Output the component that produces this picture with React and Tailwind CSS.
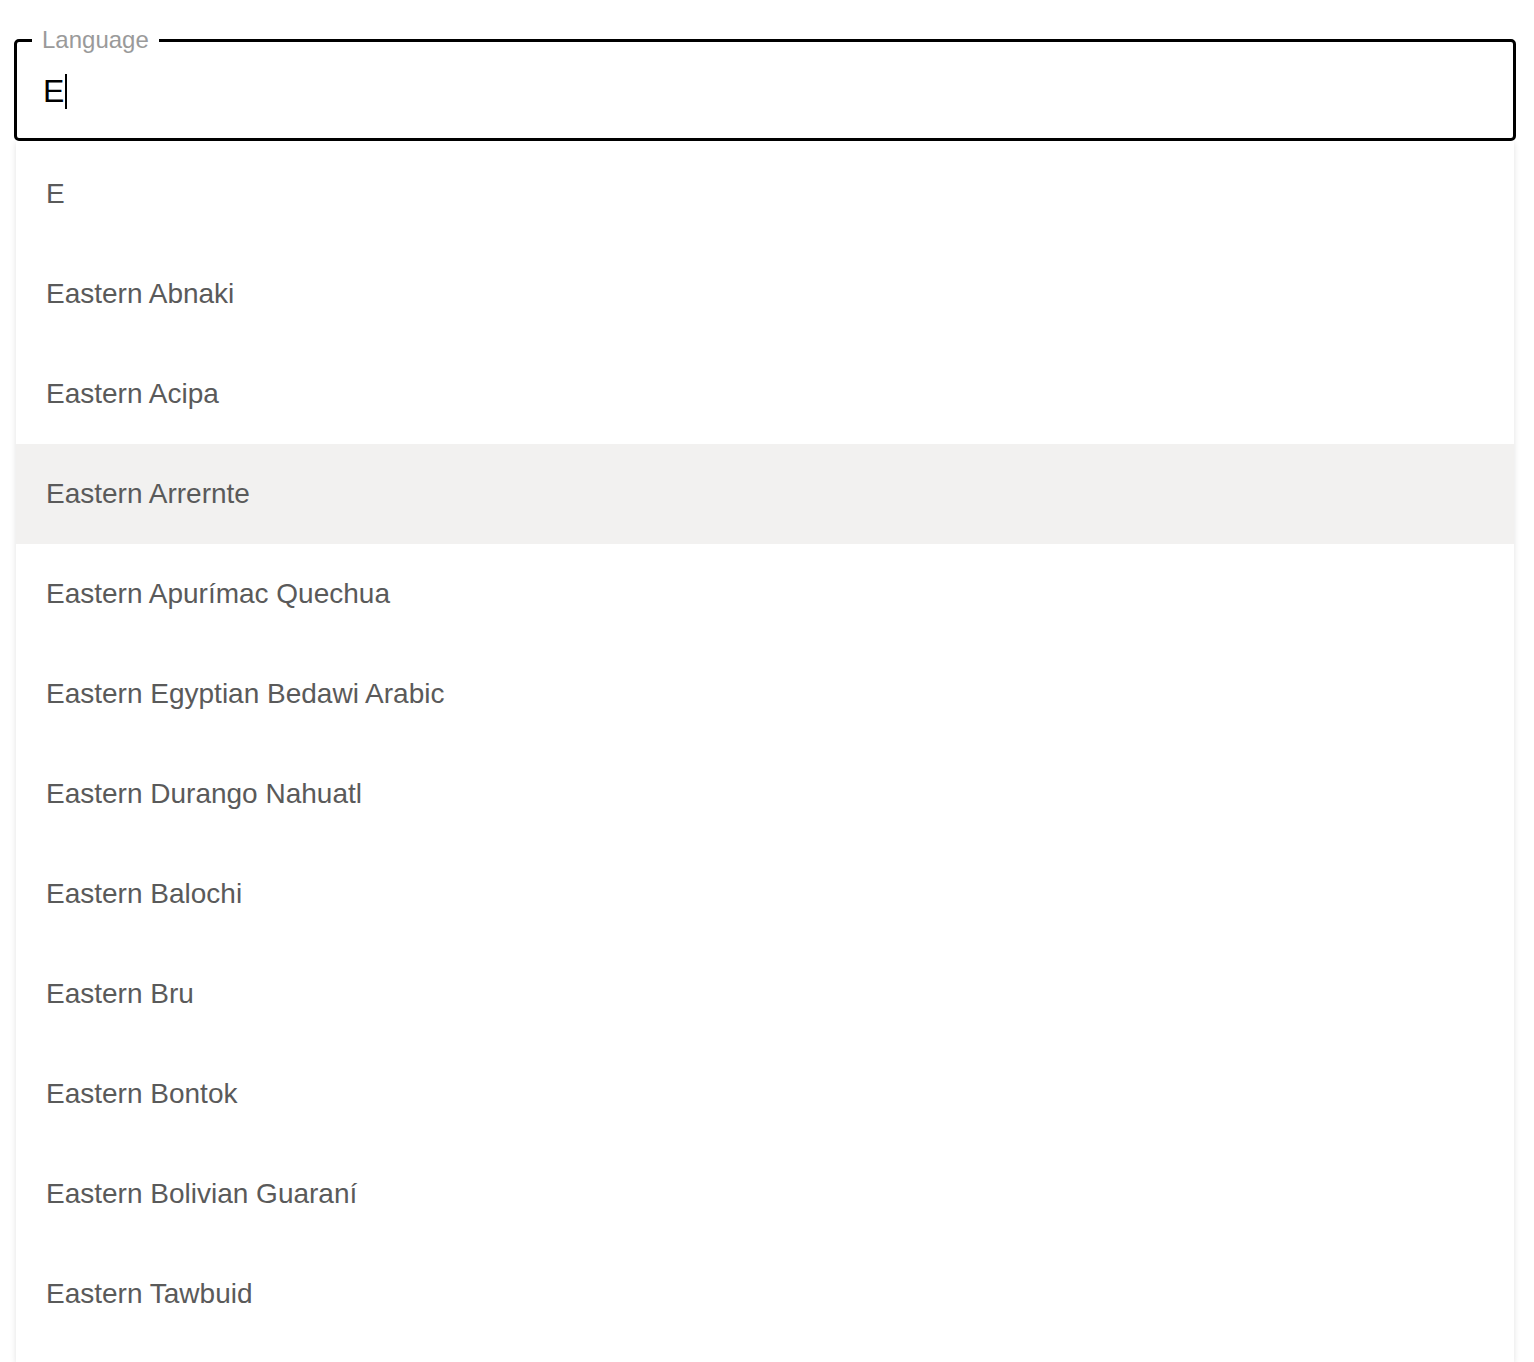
import React from 'react';

const options = [
  'E',
  'Eastern Abnaki',
  'Eastern Acipa',
  'Eastern Arrernte',
  'Eastern Apurímac Quechua',
  'Eastern Egyptian Bedawi Arabic',
  'Eastern Durango Nahuatl',
  'Eastern Balochi',
  'Eastern Bru',
  'Eastern Bontok',
  'Eastern Bolivian Guaraní',
  'Eastern Tawbuid',
];

const App = () => {
  const active = 'Eastern Arrernte';

  return (
    <div className="bg-white font-['Liberation_Sans',Arial,sans-serif] h-[1362px] overflow-hidden">
      <div className="pl-[14px] pr-[18px] pt-[28px]">
        {/* Input with outlined label */}
        <fieldset className="border-[3px] border-black rounded-[5px] px-[15px] pb-0 m-0">
          <legend className="px-[10px] text-[24px] leading-[24px] text-[#9a9a9a]">
            Language
          </legend>
          <div className="flex items-center h-[40px] mt-[19px] mb-[27px] pl-[11px] text-[32px] leading-[40px] text-black">
            E
            <span className="inline-block w-[2px] h-[35px] bg-black ml-[1px]" />
          </div>
        </fieldset>

        {/* Options list */}
        <div className="mx-[2px] h-[1221px] overflow-hidden bg-white pt-[3px] shadow-[0_2px_6px_rgba(0,0,0,0.12)]">
          {options.map((opt) => (
            <div
              key={opt}
              className={`h-[100px] flex items-center pl-[30px] text-[28px] text-[#5a5a5a] ${
                opt === active ? 'bg-[#f2f1f0]' : 'bg-white'
              }`}
            >
              {opt}
            </div>
          ))}
        </div>
      </div>
    </div>
  );
};

export default App;
